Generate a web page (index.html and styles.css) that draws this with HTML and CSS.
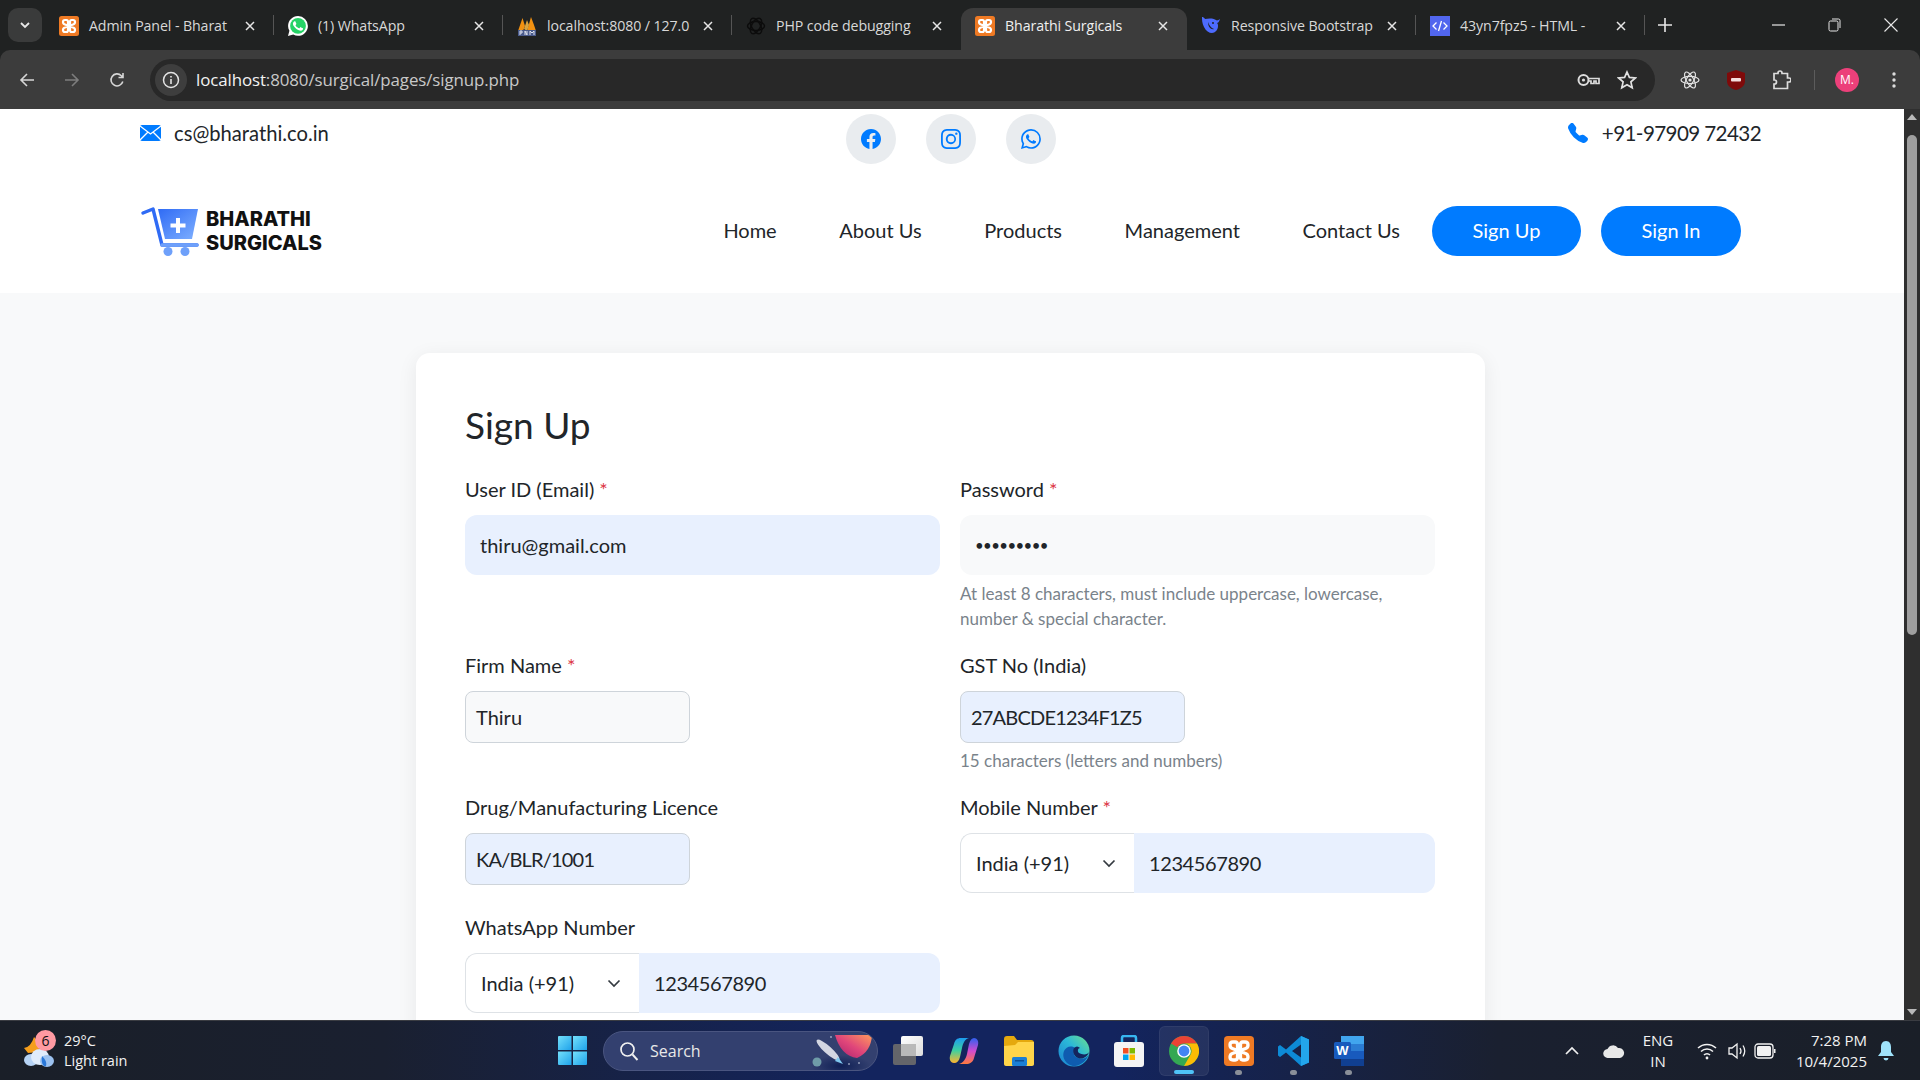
FILE: index.html
```html
<!DOCTYPE html>
<html lang="en">
<head>
<meta charset="utf-8">
<title>Bharathi Surgicals</title>
<link rel="stylesheet" href="styles.css">
</head>
<body>
<svg class="defs" width="0" height="0" aria-hidden="true">
  <symbol id="xampp" viewBox="0 0 20 20">
    <rect width="20" height="20" rx="2.5" fill="#ef7a24"/>
    <g fill="none" stroke="#fff" stroke-width="2.2" stroke-linecap="round" stroke-linejoin="round">
      <path d="M6 4 H7.5 Q9 4 9 6 V14 Q9 16 7.5 16 H6 Q4 16 4 14 Q4 12 6 11.5 L14 8.5 Q16 8 16 6 Q16 4 14 4 H12.5 Q11 4 11 6 V14 Q11 16 12.5 16 H14 Q16 16 16 14 Q16 12 14 11.5 L6 8.5 Q4 8 4 6 Q4 4 6 4Z"/>
    </g>
  </symbol>
  <symbol id="close" viewBox="0 0 10 10">
    <path d="M1 1 9 9M9 1 1 9" stroke="#e6e6e6" stroke-width="1.5" fill="none"/>
  </symbol>
</svg>

<div class="tabstrip">
  <div class="tabsearch"><svg width="10" height="7" viewBox="0 0 10 7"><path d="M1 1l4 4 4-4" fill="none" stroke="#e8e8e8" stroke-width="1.8"/></svg></div>
  <div class="tab sep">
    <svg class="fav" width="20" height="20"><use href="#xampp"/></svg>
    <span class="tabtext">Admin Panel - Bharat</span>
    <svg class="tabx" width="10" height="10"><use href="#close"/></svg>
  </div>
  <div class="tab sep">
    <svg class="fav" width="20" height="20" viewBox="0 0 16 16"><path fill="#fff" d="M13.601 2.326A7.85 7.85 0 0 0 7.994 0C3.627 0 .068 3.558.064 7.926c0 1.399.366 2.76 1.057 3.965L0 16l4.204-1.102a7.9 7.9 0 0 0 3.79.965h.004c4.368 0 7.926-3.558 7.93-7.93A7.9 7.9 0 0 0 13.6 2.326z"/><circle cx="8" cy="7.9" r="6.3" fill="#25d366"/><path fill="#fff" d="M11.609 9.587c-.197-.099-1.17-.578-1.353-.646-.182-.065-.315-.099-.445.099-.133.197-.513.646-.627.775-.114.133-.232.148-.43.05-.197-.1-.836-.308-1.592-.985-.59-.525-.985-1.175-1.103-1.372-.114-.198-.011-.304.088-.403.087-.088.197-.232.296-.346.1-.114.133-.198.198-.33.065-.134.034-.248-.015-.347-.05-.099-.445-1.076-.612-1.47-.16-.389-.323-.335-.445-.34-.114-.007-.247-.007-.38-.007a.73.73 0 0 0-.529.247c-.182.198-.691.677-.691 1.654s.71 1.916.81 2.049c.098.133 1.394 2.132 3.383 2.992.47.205.84.326 1.129.418.475.152.904.129 1.246.08.38-.058 1.171-.48 1.338-.943.164-.464.164-.86.114-.943-.049-.084-.182-.133-.38-.232"/></svg>
    <span class="tabtext">(1) WhatsApp</span>
    <svg class="tabx" width="10" height="10"><use href="#close"/></svg>
  </div>
  <div class="tab sep">
    <svg class="fav" width="20" height="20" viewBox="0 0 20 20"><path d="M1 15 5.5 2 8 10 6 15Z" fill="#f29111"/><path d="M10 15 14 1 17 9 19 15Z" fill="#f29111"/><path d="M7 13 10 4 12 9 10 15Z" fill="#d9a441"/><rect x="1" y="14" width="18" height="6" fill="#4a5b8c"/><path d="M3 19v-4h2v2H3M8 19v-4l2 4v-4M13 19v-4l2 2 2-2v4" stroke="#dfe3ef" fill="none"/></svg>
    <span class="tabtext">localhost:8080 / 127.0</span>
    <svg class="tabx" width="10" height="10"><use href="#close"/></svg>
  </div>
  <div class="tab">
    <svg class="fav" width="20" height="20" viewBox="0 0 20 20"><g fill="none" stroke="#0c0c0c" stroke-width="1.5"><ellipse cx="10" cy="10" rx="8.5" ry="4.4"/><ellipse cx="10" cy="10" rx="8.5" ry="4.4" transform="rotate(60 10 10)"/><ellipse cx="10" cy="10" rx="8.5" ry="4.4" transform="rotate(120 10 10)"/></g></svg>
    <span class="tabtext">PHP code debugging</span>
    <svg class="tabx" width="10" height="10"><use href="#close"/></svg>
  </div>
  <div class="tab active">
    <svg class="fav" width="20" height="20"><use href="#xampp"/></svg>
    <span class="tabtext">Bharathi Surgicals</span>
    <svg class="tabx" width="10" height="10"><use href="#close"/></svg>
  </div>
  <div class="tab sep">
    <svg class="fav" width="20" height="20" viewBox="0 0 20 20"><path d="M19 3c-1 1-2 1-3 1.5C13 2 8 2 4 3 3 1.5 2 1 1 1c0 3 0 6 2 10 2 4 5 6 8 6 3 0 6-3 6-7 0-1 0-2-1-3 1 0 2-1 3-4Z" fill="#4d6bfe"/><path d="M7 6c1 3 3 6 6 7-3 1-6-2-6-7Z" fill="#202222"/><circle cx="12" cy="7" r="1" fill="#202222"/></svg>
    <span class="tabtext">Responsive Bootstrap</span>
    <svg class="tabx" width="10" height="10"><use href="#close"/></svg>
  </div>
  <div class="tab sep">
    <svg class="fav" width="20" height="20" viewBox="0 0 20 20"><rect width="20" height="20" fill="#5166ee"/><path d="M6.5 6.5 3 10l3.500 3.500M13.500 6.500 17 10l-3.500 3.500M11.500 5 8.500 15" fill="none" stroke="#fff" stroke-width="1.3"/></svg>
    <span class="tabtext">43yn7fpz5 - HTML -</span>
    <svg class="tabx" width="10" height="10"><use href="#close"/></svg>
  </div>
  <svg class="newtab" width="14" height="14" viewBox="0 0 14 14"><path d="M7 0v14M0 7h14" stroke="#e8e8e8" stroke-width="1.6"/></svg>
  <div class="winctl">
    <svg width="13" height="2" viewBox="0 0 13 2"><path d="M0 1h13" stroke="#e8e8e8" stroke-width="1.2"/></svg>
    <svg width="13" height="14" viewBox="0 0 13 14"><rect x="1" y="3" width="9" height="10" rx="1.5" fill="none" stroke="#e8e8e8"/><path d="M4 1h6.500Q12 1 12 2.500V10" fill="none" stroke="#e8e8e8"/></svg>
    <svg width="14" height="14" viewBox="0 0 14 14"><path d="M.5.5l13 13M13.500.5l-13 13" stroke="#e8e8e8" stroke-width="1.1"/></svg>
  </div>
</div>

<div class="toolbar">
  <svg class="navicon" width="16" height="16" viewBox="0 0 16 16"><path d="M15 8H2M8 2 2 8l6 6" fill="none" stroke="#d6d6d6" stroke-width="1.6"/></svg>
  <svg class="navicon" width="16" height="16" viewBox="0 0 16 16"><path d="M1 8h13M8 2l6 6-6 6" fill="none" stroke="#7d7d7d" stroke-width="1.6"/></svg>
  <svg class="navicon" width="16" height="16" viewBox="0 0 16 16"><path d="M13.800 9.500A6 6 0 1 1 12.300 3.700L14 5.500M14 1v4.500H9.500" fill="none" stroke="#d6d6d6" stroke-width="1.6"/></svg>
  <div class="omnibox">
    <span class="infochip"><svg width="18" height="18" viewBox="0 0 18 18"><circle cx="9" cy="9" r="7.5" fill="none" stroke="#e4e4e4" stroke-width="1.5"/><path d="M9 8v5M9 5v1.600" stroke="#e4e4e4" stroke-width="1.6"/></svg></span>
    <span class="url"><b>localhost</b>:8080/surgical/pages/signup.php</span>
    <svg class="omniicon" width="24" height="14" viewBox="0 0 24 14"><circle cx="6.5" cy="7" r="5" fill="none" stroke="#dcdcdc" stroke-width="2"/><circle cx="6.5" cy="7" r="1.6" fill="#dcdcdc"/><path d="M11.500 5.500H22v5h-3V8h-2v2.500h-3V8h-2.500" fill="none" stroke="#dcdcdc" stroke-width="1.7"/></svg>
    <svg class="omniicon star" width="20" height="20" viewBox="0 0 20 20"><path d="M10 2l2.400 5.400 5.900.6-4.400 3.900 1.300 5.800L10 14.700l-5.200 3 1.300-5.800L1.700 8l5.900-.6Z" fill="none" stroke="#e2e2e2" stroke-width="1.7"/></svg>
  </div>
  <div class="extensions">
    <svg width="20" height="20" viewBox="0 0 20 20"><g fill="none" stroke="#e4e4e4" stroke-width="1.2"><ellipse cx="10" cy="10" rx="9" ry="3.6"/><ellipse cx="10" cy="10" rx="9" ry="3.6" transform="rotate(60 10 10)"/><ellipse cx="10" cy="10" rx="9" ry="3.6" transform="rotate(120 10 10)"/></g><circle cx="10" cy="10" r="1.6" fill="#e4e4e4"/></svg>
    <svg width="18" height="20" viewBox="0 0 18 20"><path d="M9 0 18 3v8c0 5-4 7.500-9 9-5-1.500-9-4-9-9V3Z" fill="#7f0a0a"/><rect x="4" y="8" width="10" height="3.5" rx="1" fill="#f4dede"/></svg>
    <svg width="20" height="20" viewBox="0 0 20 20"><path d="M7 3.500V3a2 2 0 0 1 4 0v.5h5.500V8H18a2 2 0 0 1 0 4h-1.500v6.500H3V14h.5a2 2 0 0 0 0-4H3V3.500Z" fill="none" stroke="#dcdcdc" stroke-width="1.7"/></svg>
    <span class="extsep"></span>
    <span class="avatar">M.</span>
    <svg width="4" height="16" viewBox="0 0 4 16"><g fill="#dcdcdc"><circle cx="2" cy="2" r="1.7"/><circle cx="2" cy="8" r="1.7"/><circle cx="2" cy="14" r="1.7"/></g></svg>
  </div>
</div>

<div class="viewport">
  <div class="page">
    <header class="site-header">
      <div class="topbar">
        <div class="contact">
          <svg width="21" height="16" viewBox="0 0 21 16"><rect width="21" height="16" rx="2" fill="#007bff"/><path d="M0 1l10.500 8L21 1M0 15l8-8M21 15l-8-8" fill="none" stroke="#fff" stroke-width="1.3"/></svg>
          <span>cs@bharathi.co.in</span>
        </div>
        <div class="socials">
          <a class="social"><svg width="20" height="20" viewBox="0 0 16 16"><path fill="#007bff" d="M16 8.049c0-4.446-3.582-8.05-8-8.05C3.58 0-.002 3.603-.002 8.05c0 4.017 2.926 7.347 6.75 7.95v-5.625h-2.03V8.05H6.750V6.275c0-2.017 1.195-3.131 3.022-3.131.876 0 1.791.157 1.791.157v1.980h-1.009c-.993 0-1.303.621-1.303 1.258v1.510h2.218l-.354 2.326H9.250V16c3.824-.604 6.750-3.934 6.750-7.951"/></svg></a>
          <a class="social"><svg width="20" height="20" viewBox="0 0 16 16"><path fill="#007bff" d="M8 0C5.829 0 5.556.01 4.703.048 3.850.088 3.269.222 2.760.420a3.900 3.900 0 0 0-1.417.923A3.900 3.900 0 0 0 .420 2.760C.222 3.268.087 3.850.048 4.700.01 5.555 0 5.827 0 8.001c0 2.172.01 2.444.048 3.297.04.852.174 1.433.372 1.942.205.526.478.972.923 1.417.444.445.890.719 1.416.923.510.198 1.090.333 1.942.372C5.555 15.990 5.827 16 8 16s2.444-.01 3.298-.048c.851-.04 1.434-.174 1.943-.372a3.900 3.900 0 0 0 1.416-.923c.445-.445.718-.891.923-1.417.197-.509.332-1.090.372-1.942C15.990 10.445 16 10.173 16 8s-.01-2.445-.048-3.299c-.04-.851-.175-1.433-.372-1.941a3.900 3.900 0 0 0-.923-1.417A3.900 3.900 0 0 0 13.240.420c-.510-.198-1.092-.333-1.943-.372C10.443.01 10.172 0 7.998 0zm-.717 1.442h.718c2.136 0 2.389.007 3.232.046.780.035 1.204.166 1.486.275.373.145.640.319.920.599s.453.546.598.920c.110.281.240.705.275 1.485.039.843.047 1.096.047 3.231s-.008 2.389-.047 3.232c-.035.780-.166 1.203-.275 1.485a2.500 2.500 0 0 1-.599.919c-.280.280-.546.453-.920.598-.280.110-.704.240-1.485.276-.843.038-1.096.047-3.232.047s-2.390-.009-3.233-.047c-.780-.036-1.203-.166-1.485-.276a2.500 2.500 0 0 1-.920-.598 2.500 2.500 0 0 1-.600-.920c-.109-.281-.240-.705-.275-1.485-.038-.843-.046-1.096-.046-3.233s.008-2.388.046-3.231c.036-.780.166-1.204.276-1.486.145-.373.319-.640.599-.920s.546-.453.920-.598c.282-.110.705-.240 1.485-.276.738-.034 1.024-.044 2.515-.045zm4.988 1.328a.960.960 0 1 0 0 1.920.960.960 0 0 0 0-1.920m-4.270 1.122a4.109 4.109 0 1 0 0 8.217 4.109 4.109 0 0 0 0-8.217m0 1.441a2.667 2.667 0 1 1 0 5.334 2.667 2.667 0 0 1 0-5.334"/></svg></a>
          <a class="social"><svg width="20" height="20" viewBox="0 0 16 16"><path fill="#007bff" d="M13.601 2.326A7.850 7.850 0 0 0 7.994 0C3.627 0 .068 3.558.064 7.926c0 1.399.366 2.760 1.057 3.965L0 16l4.204-1.102a7.900 7.900 0 0 0 3.790.965h.004c4.368 0 7.926-3.558 7.930-7.930A7.900 7.900 0 0 0 13.600 2.326zM7.994 14.521a6.600 6.600 0 0 1-3.356-.920l-.240-.144-2.494.654.666-2.433-.156-.251a6.560 6.560 0 0 1-1.007-3.505c0-3.626 2.957-6.584 6.591-6.584a6.560 6.560 0 0 1 4.660 1.931 6.560 6.560 0 0 1 1.928 4.660c-.004 3.639-2.961 6.592-6.592 6.592m3.615-4.934c-.197-.099-1.170-.578-1.353-.646-.182-.065-.315-.099-.445.099-.133.197-.513.646-.627.775-.114.133-.232.148-.430.050-.197-.100-.836-.308-1.592-.985-.590-.525-.985-1.175-1.103-1.372-.114-.198-.011-.304.088-.403.087-.088.197-.232.296-.346.100-.114.133-.198.198-.330.065-.134.034-.248-.015-.347-.050-.099-.445-1.076-.612-1.470-.160-.389-.323-.335-.445-.340-.114-.007-.247-.007-.380-.007a.730.730 0 0 0-.529.247c-.182.198-.691.677-.691 1.654s.710 1.916.810 2.049c.098.133 1.394 2.132 3.383 2.992.470.205.840.326 1.129.418.475.152.904.129 1.246.080.380-.058 1.171-.480 1.338-.943.164-.464.164-.860.114-.943-.049-.084-.182-.133-.380-.232"/></svg></a>
        </div>
        <div class="contact phone">
          <svg width="20" height="20" viewBox="0 0 16 16"><path fill="#007bff" d="M1.885.511a1.745 1.745 0 0 1 2.610.163L6.290 2.980c.329.423.445.974.315 1.494l-.547 2.190a.680.680 0 0 0 .178.643l2.457 2.457a.680.680 0 0 0 .644.178l2.189-.547a1.750 1.750 0 0 1 1.494.315l2.306 1.794c.829.645.905 1.870.163 2.611l-1.034 1.034c-.740.740-1.846 1.065-2.877.702a18.600 18.600 0 0 1-7.010-4.420 18.600 18.600 0 0 1-4.420-7.009c-.362-1.030-.037-2.137.703-2.877z"/></svg>
          <span>+91-97909 72432</span>
        </div>
      </div>
      <div class="navrow">
        <a class="brand">
          <svg width="60" height="51" viewBox="0 0 60 51">
            <defs><linearGradient id="cartg" x1="0" y1="0" x2="1" y2="1"><stop offset="0" stop-color="#2f6bf5"/><stop offset="1" stop-color="#7fb0ff"/></linearGradient></defs>
            <path d="M3 7 13 3 22 39H57" fill="none" stroke="#2f6bf5" stroke-width="3.4" stroke-linecap="round" stroke-linejoin="round"/>
            <path d="M22 39H57" fill="none" stroke="#6ea0fa" stroke-width="3.4" stroke-linecap="round"/>
            <path d="M18 3H58L52 33H25Z" fill="url(#cartg)"/>
            <path d="M38 12v15M30.500 19.500h15" stroke="#fff" stroke-width="4"/>
            <circle cx="28" cy="45.500" r="4.5" fill="#6ea0fa"/><circle cx="45" cy="45.500" r="4.5" fill="#6ea0fa"/>
          </svg>
          <span class="brandname">BHARATHI<br>SURGICALS</span>
        </a>
        <nav class="mainnav">
          <a>Home</a><a>About Us</a><a>Products</a><a>Management</a><a>Contact Us</a>
        </nav>
        <a class="pill first">Sign Up</a>
        <a class="pill">Sign In</a>
      </div>
    </header>

    <main class="content">
      <section class="card">
        <h1>Sign Up</h1>
        <div class="formgrid">
          <div class="field">
            <div class="label">User ID (Email) <i>*</i></div>
            <div class="input big filled">thiru@gmail.com</div>
          </div>
          <div class="field">
            <div class="label">Password <i>*</i></div>
            <div class="input big plain dots">•••••••••</div>
            <p class="help">At least 8 characters, must include uppercase, lowercase, number &amp; special character.</p>
          </div>
          <div class="field">
            <div class="label">Firm Name <i>*</i></div>
            <div class="input small plain">Thiru</div>
          </div>
          <div class="field">
            <div class="label">GST No (India)</div>
            <div class="input small filled">27ABCDE1234F1Z5</div>
            <p class="help tight">15 characters (letters and numbers)</p>
          </div>
          <div class="field">
            <div class="label">Drug/Manufacturing Licence</div>
            <div class="input small filled">KA/BLR/1001</div>
          </div>
          <div class="field">
            <div class="label">Mobile Number <i>*</i></div>
            <div class="phonegroup">
              <div class="select">India (+91)<svg width="14" height="9" viewBox="0 0 14 9"><path d="M1.500 1.500 7 7l5.500-5.500" fill="none" stroke="#343a40" stroke-width="1.7"/></svg></div>
              <div class="number">1234567890</div>
            </div>
          </div>
          <div class="field">
            <div class="label">WhatsApp Number</div>
            <div class="phonegroup">
              <div class="select">India (+91)<svg width="14" height="9" viewBox="0 0 14 9"><path d="M1.500 1.500 7 7l5.500-5.500" fill="none" stroke="#343a40" stroke-width="1.7"/></svg></div>
              <div class="number">1234567890</div>
            </div>
          </div>
        </div>
      </section>
    </main>
  </div>
  <div class="scrollbar">
    <svg width="16" height="16" viewBox="0 0 16 16"><path d="M3 11 8 5l5 6Z" fill="#b8b8b8"/></svg>
    <div class="track"><div class="thumb"></div></div>
    <svg width="16" height="16" viewBox="0 0 16 16"><path d="M3 5 8 11l5-6Z" fill="#b8b8b8"/></svg>
  </div>
</div>

<footer class="taskbar">
  <div class="weather">
    <div class="wicon">
      <svg width="34" height="36" viewBox="0 0 34 36"><path d="M2 15 Q9 14 12 4 Q20 11 16 19 L6 20Z" fill="#f59e1c"/><ellipse cx="9" cy="27" rx="7" ry="6" fill="#b6d3f5"/><ellipse cx="18" cy="24" rx="9" ry="8" fill="#e0ecfb"/><ellipse cx="25" cy="28" rx="7" ry="6" fill="#9cc2f0"/><path d="M20 23c3 3 5 6 4 10-3 1-5-3-4-10Z" fill="#2977d9"/></svg>
      <span class="wbadge">6</span>
    </div>
    <div class="wtext"><span>29°C</span><span>Light rain</span></div>
  </div>
  <div class="centerbar">
    <svg class="startlogo" width="29" height="29" viewBox="0 0 29 29"><defs><linearGradient id="win" x1="0" y1="0" x2="1" y2="1"><stop offset="0" stop-color="#74e0fb"/><stop offset="1" stop-color="#1ea2ea"/></linearGradient></defs><g fill="url(#win)"><path d="M1 0h12.500v14H0V1Q0 0 1 0Z"/><path d="M15 0h13q1 0 1 1v13H15Z"/><path d="M0 15.500h13.500V29H1q-1 0-1-1Z"/><path d="M15 15.500h14V28q0 1-1 1H15Z"/></g></svg>
    <div class="searchbox">
      <svg width="20" height="20" viewBox="0 0 20 20"><circle cx="8.500" cy="8.500" r="6.5" fill="none" stroke="#f0f0f0" stroke-width="1.7"/><path d="M13.500 13.500 18.500 19" stroke="#f0f0f0" stroke-width="1.9"/></svg>
      <span>Search</span>
      <svg class="rocket" width="64" height="38" viewBox="0 0 64 38">
        <defs>
          <linearGradient id="planet" x1="1" y1="0" x2="0" y2="1"><stop offset="0" stop-color="#ff9a5c"/><stop offset=".5" stop-color="#e0467a"/><stop offset="1" stop-color="#a8206e"/></linearGradient>
          <radialGradient id="ground"><stop offset="0" stop-color="#0f1f55"/><stop offset="1" stop-color="#0f1f55" stop-opacity="0"/></radialGradient>
        </defs>
        <ellipse cx="30" cy="34" rx="30" ry="11" fill="url(#ground)"/>
        <path d="M24 3H61Q60 20 46 26 30 24 24 3Z" fill="url(#planet)"/>
        <ellipse cx="17" cy="18" rx="15" ry="3.8" transform="rotate(42 17 18)" fill="#d3d6e2"/>
        <path d="M27 25l5 7-8-3Z" fill="#7fc8f0"/>
        <circle cx="6" cy="30" r="4.5" fill="#6f9ca8"/>
        <g fill="#dfe5f5"><circle cx="20" cy="5" r=".8"/><circle cx="38" cy="32" r=".8"/><circle cx="48" cy="31" r=".8"/></g>
      </svg>
    </div>
    <span class="tbicon"><svg width="32" height="32" viewBox="0 0 32 32"><defs><linearGradient id="tv" x1="0" y1="0" x2="1" y2="1"><stop offset="0" stop-color="#fff"/><stop offset="1" stop-color="#dcdcdc"/></linearGradient></defs><rect x="8" y="1" width="22" height="20" rx="2" fill="url(#tv)"/><rect x="0" y="9" width="23" height="21" rx="2" fill="#6b6b6b" opacity=".92"/><rect x="8" y="9" width="15" height="12" fill="#b9b9b9"/></svg></span>
    <span class="tbicon"><svg width="30" height="30" viewBox="0 0 30 30">
      <defs>
        <linearGradient id="copl" x1="0" y1="0" x2="0" y2="1"><stop offset="0" stop-color="#1c9cf0"/><stop offset=".5" stop-color="#3ed0a0"/><stop offset="1" stop-color="#ffb52e"/></linearGradient>
        <linearGradient id="copr" x1="0" y1="0" x2="0" y2="1"><stop offset="0" stop-color="#2f5ff0"/><stop offset=".5" stop-color="#d04bd0"/><stop offset="1" stop-color="#ff7a3d"/></linearGradient>
      </defs>
      <path d="M12 2h8c-4 1-6 5-7 10l-2 9c-1 4-3 6-6 6-3 0-5-3-4-7L5 8c1-4 3-6 7-6Z" fill="url(#copl)"/>
      <path d="M17 28H10c4-1 7-5 8-10l2-10c1-4 3-6 5-6 3 0 5 3 4 7l-4 13c-1 4-4 6-8 6Z" fill="url(#copr)"/>
    </svg></span>
    <span class="tbicon"><svg width="30" height="30" viewBox="0 0 30 30"><path d="M0 3Q0 0 3 0H10L13 4H27Q30 4 30 7V28Q30 29 28 29H2Q0 29 0 27Z" fill="#e5a90e"/><path d="M0 10L11 9 14 6H30V28Q30 30 28 30H2Q0 30 0 28Z" fill="#ffd54a"/><rect x="8" y="21" width="15" height="9" rx="1.5" fill="#1b7fd6"/><rect x="11" y="24" width="9" height="1.5" fill="#0c4f96"/></svg></span>
    <span class="tbicon"><svg width="32" height="32" viewBox="0 0 32 32"><defs><linearGradient id="edge" x1="0" y1="1" x2="1" y2="0"><stop offset="0" stop-color="#1a7fd0"/><stop offset=".55" stop-color="#2bb8d8"/><stop offset="1" stop-color="#6fe08a"/></linearGradient></defs><circle cx="16" cy="16" r="15.500" fill="url(#edge)"/><path d="M31 19c-2 5-9 6-13 3-3-2-3-6-1-9-4-3-9-1-11 3-2 5 0 11 6 14 2 1 4 1 5 1 7-1 12-6 14-12Z" fill="#0f5cb0"/><path d="M31 17C30 20 24 20 21 18 19 16 20 13 22 13 20 11 18 11 16 13 14 17 16 21 20 23 25 25 30 21 31 17Z" fill="#14245e"/></svg></span>
    <span class="tbicon"><svg width="30" height="32" viewBox="0 0 30 32"><path d="M8 8V3q0-2 2-2h10q2 0 2 2v5" fill="none" stroke="#37b6f0" stroke-width="2.5"/><rect y="7" width="30" height="25" rx="3" fill="#f4f4f4"/><rect x="9" y="13" width="5.500" height="5.500" fill="#f25022"/><rect x="15.500" y="13" width="5.500" height="5.500" fill="#7fba00"/><rect x="9" y="19.500" width="5.500" height="5.500" fill="#00a4ef"/><rect x="15.500" y="19.500" width="5.500" height="5.500" fill="#ffb900"/></svg></span>
    <span class="tbicon running active"><svg width="30" height="30" viewBox="0 0 30 30"><circle cx="15" cy="15" r="15" fill="#34a853"/><path d="M15 0A15 15 0 0 1 28 7.500H15A7.500 7.500 0 0 0 8.500 11.250L2 7.500A15 15 0 0 1 15 0Z" fill="#ea4335"/><path d="M28 7.500A15 15 0 0 1 15 30L21.500 18.750A7.500 7.500 0 0 0 15 7.500Z" fill="#fbbc05"/><circle cx="15" cy="15" r="6.8" fill="#fff"/><circle cx="15" cy="15" r="5.4" fill="#4285f4"/></svg></span>
    <span class="tbicon running"><svg width="30" height="30"><use href="#xampp"/></svg></span>
    <span class="tbicon running"><svg width="32" height="32" viewBox="0 0 32 32"><path d="M23 1 31 4.500V27.500L23 31 8 17.500 2 22 0 20.500V11.500L2 10 8 14.500ZM23 9.500 14 16l9 6.500Z" fill="#0d8ad6"/><path d="M23 1 31 4.500V27.500L23 31Z" fill="#23a6ec"/></svg></span>
    <span class="tbicon running"><svg width="30" height="30" viewBox="0 0 30 30"><rect x="7" width="23" height="30" rx="1" fill="#2b7cd3"/><rect x="7" y="0" width="23" height="8" fill="#41a5ee"/><rect x="7" y="15" width="23" height="8" fill="#185abd"/><rect x="7" y="23" width="23" height="7" fill="#103f91"/><rect y="6" width="17" height="17" rx="1.5" fill="#185abd"/><text x="8.500" y="19" class="wordw">W</text></svg></span>
  </div>
  <div class="tray">
    <svg width="14" height="9" viewBox="0 0 14 9"><path d="M1 8l6-6 6 6" fill="none" stroke="#f0f0f0" stroke-width="1.7"/></svg>
    <svg class="onedrive" width="22" height="14" viewBox="0 0 22 14"><path d="M5 14a4.500 4.500 0 0 1-.5-9A6 6 0 0 1 15 4a5 5 0 0 1 2 10Z" fill="#e8e8e8"/></svg>
    <div class="lang"><span>ENG</span><span>IN</span></div>
    <svg class="wifi" width="20" height="18" viewBox="0 0 20 18"><g fill="none" stroke="#f2f2f2" stroke-width="1.5"><path d="M1 6a13 13 0 0 1 18 0M4 9.500a8.500 8.500 0 0 1 12 0M7 13a4 4 0 0 1 6 0"/></g><circle cx="10" cy="16" r="1.4" fill="#f2f2f2"/></svg>
    <svg class="vol" width="20" height="18" viewBox="0 0 20 18"><path d="M1 6h3l5-4v14l-5-4H1Z" fill="none" stroke="#f2f2f2" stroke-width="1.3"/><path d="M12 6q2 3 0 6M15 3.500q3.500 5.500 0 11" fill="none" stroke="#f2f2f2" stroke-width="1.3"/></svg>
    <svg class="batt" width="22" height="16" viewBox="0 0 22 16"><rect x="1" y="1" width="18" height="14" rx="3" fill="none" stroke="#f2f2f2" stroke-width="1.3"/><rect x="3" y="3" width="14" height="10" rx="1.5" fill="#f2f2f2"/><rect x="20" y="6" width="1.5" height="4" fill="#f2f2f2"/></svg>
    <div class="clock"><span>7:28 PM</span><span>10/4/2025</span></div>
    <svg class="bell" width="18" height="22" viewBox="0 0 18 22"><path d="M9 1c-3.500 0-5 3-5 6v5l-3 4h16l-3-4V7c0-3-1.500-6-5-6Z" fill="#9fe3fb"/><path d="M6.500 18a2.500 2.500 0 0 0 5 0Z" fill="#9fe3fb"/></svg>
  </div>
</footer>
</body>
</html>
```

FILE: styles.css
```css
* { box-sizing: border-box; }
html, body { margin: 0; height: 100%; overflow: hidden; }
body { display: flex; flex-direction: column; height: 1080px; font-family: Lato, "Open Sans", sans-serif; color: #212529; background: #202222; }
.defs { position: absolute; }
a { color: inherit; text-decoration: none; }
p, h1 { margin: 0; }

/* browser chrome */
.tabstrip { height: 50px; flex: none; display: flex; align-items: flex-end; background: #202222; padding-left: 45px; position: relative; font-family: "Open Sans", "Noto Sans", sans-serif; }
.tabsearch { position: absolute; left: 8px; top: 8px; width: 34px; height: 34px; border-radius: 10px; background: #3a3b3b; display: flex; align-items: center; justify-content: center; }
.tab { width: 229px; height: 42px; display: flex; align-items: center; padding: 0 19px 7px 14px; position: relative; color: #d8d8d8; font-size: 14.2px; }
.tab.sep::after { content: ""; position: absolute; right: 0; top: 7px; height: 20px; width: 1px; background: #555; }
.tab.active { background: #3c3c3c; border-radius: 12px 12px 0 0; width: 226px; color: #f0f0f0; }
.fav { flex: none; }
.tabtext { flex: 1; min-width: 0; margin: 0 10px; white-space: nowrap; letter-spacing: -.1px; }
.tabx { flex: none; }
.newtab { align-self: center; margin: 0 0 0 13px; }
.winctl { margin-left: auto; align-self: flex-start; height: 50px; display: flex; align-items: center; gap: 43px; padding: 0 22px 0 0; }

.toolbar { height: 59px; flex: none; background: #3c3c3c; border-radius: 10px 10px 0 0; display: flex; align-items: center; padding-left: 19px; font-family: "Open Sans", "Noto Sans", sans-serif; }
.navicon { margin-right: 29px; flex: none; }
.navicon:nth-of-type(3) { margin-right: 25px; }
.omnibox { width: 1505px; height: 42px; border-radius: 21px; background: #282828; display: flex; align-items: center; padding: 0 14px 0 5px; flex: none; }
.infochip { width: 32px; height: 32px; border-radius: 50%; background: #3e3e3e; display: flex; align-items: center; justify-content: center; flex: none; }
.url { margin-left: 9px; flex: 1; font-size: 16.9px; color: #c8c8c8; letter-spacing: -.1px; }
.url b { font-weight: 400; color: #f2f2f2; }
.omniicon { flex: none; margin-right: 16px; }
.omniicon.star { margin-right: 4px; }
.extensions { display: flex; align-items: center; flex: none; padding-left: 25px; }
.extensions > svg:nth-child(1) { margin-right: 27px; }
.extensions > svg:nth-child(2) { margin-right: 26px; }
.extensions > svg:nth-child(3) { margin-right: 23px; }
.extsep { width: 1px; height: 20px; background: #5c5c5c; margin-right: 20px; }
.avatar { width: 24px; height: 24px; border-radius: 50%; background: #ec407a; color: #fff; font-size: 12px; display: flex; align-items: center; justify-content: center; margin-right: 33px; }

/* page viewport */
.viewport { flex: 1; min-height: 0; display: flex; background: #f8f9fa; overflow: hidden; }
.page { flex: 1; min-width: 0; }
.scrollbar { width: 16px; flex: none; background: #2f2f2f; display: flex; flex-direction: column; }
.track { flex: 1; padding: 10px 3px 0; }
.thumb { height: 500px; background: #9f9f9f; border-radius: 5px; }

.site-header { background: #fff; height: 184px; padding: 0 143px 0 140px; }
.topbar { height: 55px; padding-top: 5px; display: flex; align-items: flex-start; justify-content: space-between; }
.contact { display: flex; align-items: center; gap: 13px; font-size: 20.2px; font-weight: 400; height: 38px; color: #212529; width: 320px; }
.contact.phone { justify-content: flex-end; gap: 14px; font-size: 20.6px; letter-spacing: -.6px; }
.socials { display: flex; gap: 30px; }
.social { width: 50px; height: 50px; border-radius: 50%; background: #e9ecef; display: flex; align-items: center; justify-content: center; }
.navrow { display: flex; align-items: center; height: 50px; margin-top: 42px; }
.brand { display: flex; align-items: center; gap: 6px; }
.brandname { font-family: Inter, sans-serif; font-weight: 800; font-size: 20px; line-height: 24px; color: #111; letter-spacing: 0; }
.mainnav { margin-left: auto; display: flex; gap: 62.6px; font-size: 20px; color: #212529; padding-bottom: 2px; }
.pill { height: 50px; border-radius: 25px; background: #007bff; color: #fff; font-size: 20px; padding: 0 40.6px 2px; display: flex; align-items: center; justify-content: center; margin-left: 20px; }
.pill:last-child { margin-right: 20px; }
.pill.first { margin-left: 32px; }

.content { padding: 60px 419px 0 416px; }
.card { background: #fff; border-radius: 14px; box-shadow: 0 4px 20px rgba(0, 0, 0, .07); padding: 50px 49px 0; height: 900px; }
.card h1 { font-size: 37px; font-weight: 400; line-height: 44px; color: #212529; margin-bottom: 30px; }
.formgrid { display: grid; grid-template-columns: 475px 475px; column-gap: 20px; row-gap: 22px; }
.label { font-size: 20px; line-height: 24px; margin-bottom: 14px; color: #212529; }
.label i { color: #dc3545; font-style: normal; }
.input { display: flex; align-items: center; font-size: 20px; color: #212529; }
.input.big { height: 60px; border-radius: 12px; padding: 0 15px; }
.input.small { height: 52px; width: 225px; border-radius: 8px; padding: 0 10px; border: 1px solid #ced4da; }
.input.small.filled { letter-spacing: -.8px; }
.input.filled { background: #e8f0fe; }
.input.plain { background: #f8f9fa; }
.input.big.plain, .input.big.filled { border: 0; }
.input.big.dots { font-size: 15px; letter-spacing: -.6px; }
.help { margin-top: 6px; font-size: 17px; line-height: 25px; color: #7a838b; }
.help.tight { margin-top: 5px; }
.phonegroup { display: flex; height: 60px; }
.select { width: 174px; flex: none; display: flex; align-items: center; justify-content: space-between; background: #fff; border: 1px solid #dee2e6; border-right: 0; border-radius: 12px 0 0 12px; padding: 0 18px 0 15px; font-size: 20px; }
.number { flex: 1; display: flex; align-items: center; background: #e8f0fe; border-radius: 0 12px 12px 0; padding: 0 15px; font-size: 20px; letter-spacing: -.4px; }

/* taskbar */
.taskbar { height: 60px; flex: none; position: relative; display: flex; align-items: center; border-top: 1px solid #3a3c42; background: linear-gradient(90deg, #1a1f28 0%, #1a2030 20%, #13245e 45%, #13245e 58%, #1a2030 78%, #1a1f28 100%); color: #f2f2f2; font-family: "Open Sans", "Noto Sans", sans-serif; }
.weather { display: flex; align-items: center; padding-left: 22px; gap: 8px; width: 558px; flex: none; }
.wicon { position: relative; width: 34px; height: 36px; }
.wbadge { position: absolute; right: 0; top: -3px; width: 21px; height: 21px; border-radius: 50%; background: #ff9aa2; color: #111; font-size: 14px; display: flex; align-items: center; justify-content: center; }
.wtext { display: flex; flex-direction: column; font-size: 14.5px; line-height: 20px; }
.centerbar { display: flex; align-items: center; }
.startlogo { margin-right: 16px; }
.searchbox { width: 275px; height: 40px; border-radius: 20px; background: #33406f; border: 1px solid #4a5580; display: flex; align-items: center; padding-left: 15px; gap: 11px; font-size: 16px; position: relative; overflow: hidden; margin-right: 15px; color: #e8e8e8; }
.rocket { position: absolute; right: 2px; top: 0; }
.tbicon { width: 55px; height: 50px; display: flex; align-items: center; justify-content: center; position: relative; border-radius: 6px; flex: none; }
.tbicon:nth-of-type(1) { width: 32px; margin-right: 11px; }
.tbicon.active { background: rgba(255, 255, 255, .07); border: 1px solid rgba(255, 255, 255, .05); width: 50px; margin: 0 2.5px; }
.tbicon.running::after { content: ""; position: absolute; bottom: 1px; left: 50%; width: 7px; height: 5px; margin-left: -3.5px; border-radius: 3px; background: #8a8f99; }
.tbicon.active::after { width: 20px; margin-left: -10px; height: 4px; background: #4fc3f7; }
.wordw { font-family: "Liberation Sans", sans-serif; font-size: 13px; font-weight: 700; fill: #fff; text-anchor: middle; }
.tray { position: absolute; right: 0; top: 0; height: 59px; display: flex; align-items: center; width: 363px; padding-left: 8px; }
.onedrive { margin-left: 24px; }
.lang { display: flex; flex-direction: column; align-items: center; font-size: 15px; line-height: 21px; width: 40px; margin-left: 13px; }
.wifi { margin-left: 19px; }
.vol { margin-left: 11px; }
.batt { margin-left: 6px; }
.clock { display: flex; flex-direction: column; align-items: flex-end; font-size: 15px; line-height: 21px; margin-left: 14px; width: 77px; white-space: nowrap; }
.bell { margin-left: 10px; }
```
